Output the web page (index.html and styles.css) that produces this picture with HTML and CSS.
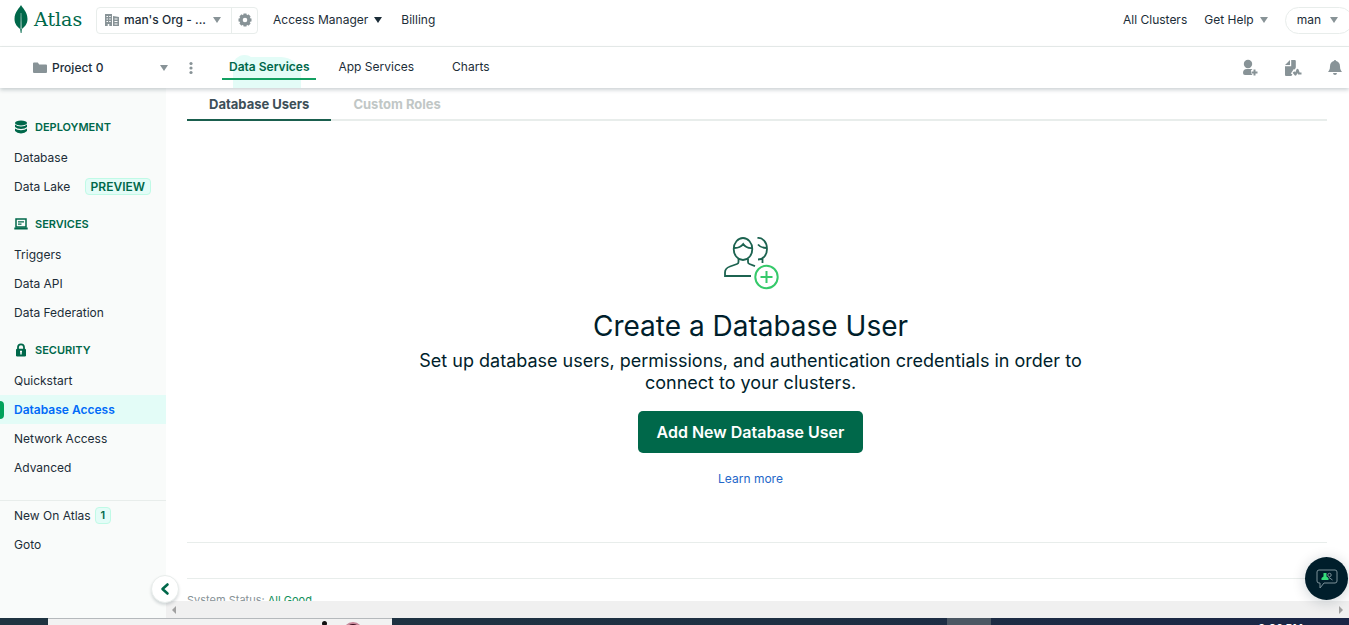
FILE: index.html
```html
<!DOCTYPE html>
<html lang="en">
<head>
<meta charset="utf-8">
<meta name="viewport" content="width=device-width, initial-scale=1">
<title>Database Access | Atlas</title>
<link rel="stylesheet" href="styles.css">
</head>
<body>
<header class="topbar">
  <a class="brand" href="#" aria-label="Atlas">
    <svg class="brand-leaf" viewBox="0 0 14 28" width="14" height="28" aria-hidden="true"><path fill="#00684a" d="M7 0C8 2.500 13.500 6.500 13.500 14c0 5-3 8-5.700 10L7.500 28h-.8L6.200 24C3.500 22 .5 19 .5 14 .5 6.500 6 2.500 7 0z"/><path fill="#fff" opacity=".7" d="M6.700 8h.6l.4 16h-1.200z"/></svg>
    <span>Atlas</span>
  </a>
  <div class="org">
    <div class="org-pick">
      <svg viewBox="0 0 14 14" width="14" height="14" aria-hidden="true"><path fill="#889397" fill-rule="evenodd" d="M0 1h7v12H0zM1.500 3v1h1.500V3zM4.200 3v1h1.500V3zM1.500 5.500v1h1.500v-1zM4.200 5.500v1h1.500v-1zM1.500 8v1h1.500V8zM4.200 8v1h1.500V8zM2.700 11v2h1.600v-2zM8 3l6 1v9H8zM9.500 5.500v1H12.500v-1zM9.500 8v1H12.500V8zM9.500 10.500v1H12.500v-1z"/></svg>
      <select aria-label="Organization"><option>man's Org - ...</option></select>
      <span class="caret grey"></span>
    </div>
    <button class="org-gear" aria-label="Organization settings"><svg viewBox="0 0 14 14" width="14" height="14"><circle cx="7" cy="7" r="4" fill="none" stroke="#889397" stroke-width="3.400"/><path stroke="#889397" stroke-width="3" d="M7 .5v2M7 11.500v2M.5 7h2M11.500 7h2M2.400 2.400l1.400 1.400M10.200 10.200l1.400 1.400M2.400 11.600l1.400-1.400M10.200 3.800l1.400-1.400"/></svg></button>
  </div>
  <nav class="top-links" aria-label="Organization">
    <button class="link">Access Manager <span class="caret"></span></button>
    <a class="link" href="#">Billing</a>
  </nav>
  <nav class="account" aria-label="Account">
    <a class="link" href="#">All Clusters</a>
    <button class="link">Get Help <span class="caret grey"></span></button>
    <button class="user">man <span class="caret grey"></span></button>
  </nav>
</header>
<div class="subbar">
  <div class="project">
    <svg viewBox="0 0 14 12" width="14" height="12" aria-hidden="true"><path fill="#889397" d="M0 1.500Q0 .5 1 .5h3.800l1.400 2H13q1 0 1 1V10q0 1-1 1H1q-1 0-1-1z"/></svg>
    <select aria-label="Project"><option>Project 0</option></select>
    <span class="caret grey"></span>
  </div>
  <button class="more" aria-label="Project options"><svg viewBox="0 0 4 14" width="4" height="14" fill="#889397"><circle cx="2" cy="2.500" r="1.600"/><circle cx="2" cy="7" r="1.600"/><circle cx="2" cy="11.500" r="1.600"/></svg></button>
  <nav class="services" aria-label="Services">
    <a class="service current" href="#">Data Services</a>
    <a class="service" href="#">App Services</a>
    <a class="service" href="#">Charts</a>
  </nav>
  <div class="tools">
    <button aria-label="Invite user"><svg viewBox="0 0 16 18" width="16" height="18" fill="#889397"><circle cx="6" cy="5" r="4.200"/><path d="M5 10h5.500L9 11.500V14l1.500 2H3q-2 0-2-2 0-4 4-4z"/><path stroke="#889397" stroke-width="2" d="M9.500 13.500h6M12.500 10.500v6"/></svg></button>
    <button aria-label="Activity feed"><svg viewBox="0 0 18 18" width="18" height="18" fill="#889397"><path d="M6 1v5H1zM7.200 1h3.600q1 0 1 1v6.500l-3 6.500-1.500 2H2q-1 0-1-1V7.200h6.200z"/><path fill="none" stroke="#fff" stroke-width="4" d="M8.500 15.500l3-4.500"/><path fill="none" stroke="#889397" stroke-width="2.200" stroke-linejoin="round" d="M9.500 13l2 2.500 2-4.500 1.300 3.500h2.700"/></svg></button>
    <button aria-label="Alerts"><svg viewBox="0 0 14 18" width="14" height="18" fill="#889397"><path d="M7 1q1 0 1.200 1Q12 3 12 7.500c0 3 1 4 2 5.500H0c1-1.500 2-2.500 2-5.500Q2 3 5.800 2 6 1 7 1zM5 14h4q-.2 2-2 2t-2-2z"/></svg></button>
  </div>
</div>
<div class="shell">
  <aside class="sidebar">
    <section>
      <h2><svg viewBox="0 0 14 14" width="14" height="14" fill="#00684a"><ellipse cx="7" cy="3" rx="6" ry="2.400"/><path d="M1 4.500Q3 6.400 7 6.400t6-1.900V7Q11 9 7 9T1 7zM1 8.400Q3 10.200 7 10.200t6-1.800V11Q11 13.400 7 13.400T1 11z"/></svg>DEPLOYMENT</h2>
      <a href="#">Database</a>
      <a class="spread" href="#">Data Lake <span class="badge wide">PREVIEW</span></a>
    </section>
    <section>
      <h2><svg viewBox="0 0 14 14" width="14" height="14"><path fill="none" stroke="#00684a" stroke-width="1.500" d="M2 2h10v8H2z"/><path stroke="#00684a" stroke-width="1.200" d="M4 4.800h6M4 7.200h3.500"/><path fill="#00684a" d="M.3 10.500h13.400v2H.3z"/></svg>SERVICES</h2>
      <a href="#">Triggers</a>
      <a href="#">Data API</a>
      <a href="#">Data Federation</a>
    </section>
    <section>
      <h2><svg viewBox="0 0 14 14" width="14" height="14"><path fill="none" stroke="#00684a" stroke-width="1.800" d="M4 6.500V4.300a3 3 0 0 1 6 0v2.200"/><rect x="2" y="5.800" width="10" height="7.700" rx="1.200" fill="#00684a"/><path stroke="#fff" stroke-width="1.400" d="M7 8v3.500M6 8.500h2"/></svg>SECURITY</h2>
      <a href="#">Quickstart</a>
      <a class="active" href="#" aria-current="page">Database Access</a>
      <a href="#">Network Access</a>
      <a href="#">Advanced</a>
    </section>
    <div class="extras">
      <a href="#">New On Atlas <span class="badge">1</span></a>
      <a href="#">Goto</a>
    </div>
    <button class="collapse" aria-label="Collapse navigation"><svg viewBox="0 0 12 14" width="12" height="14"><path fill="none" stroke="#00684a" stroke-width="2.600" stroke-linecap="round" stroke-linejoin="round" d="M8.500 2.500L3.500 7l5 4.500"/></svg></button>
  </aside>
  <div class="content">
    <main class="page">
      <nav class="tabs" aria-label="Database access">
        <a class="tab selected" href="#">Database Users</a>
        <a class="tab" href="#">Custom Roles</a>
      </nav>
      <div class="empty">
        <svg viewBox="0 0 56 56" width="56" height="56" fill="none" stroke="#1c6350" stroke-width="1.800" aria-hidden="true"><path d="M28 40H2v-3.500c0-3.500 2-5 5-6l7-2.500q1.500-.5 1.500-2v-3M25 23v3q0 1.500 1.500 2l5.500 2.200"/><ellipse cx="20" cy="13" rx="9.300" ry="11"/><path d="M10.800 12c4 .2 7.200-1 9.400-4 2 3 5 4.300 9.100 4M34.500 2c5-.5 9.500 4 9.500 11 0 5.500-3.500 10.500-9 10.500M35 8.500c2 2.500 5 3.500 8.500 3.500M39.500 23v4"/><circle cx="43.500" cy="41" r="11.200" stroke="#35c96a" stroke-width="2"/><path stroke="#35c96a" stroke-width="2" d="M37.500 41h12M43.500 35v12"/></svg>
        <h1>Create a Database User</h1>
        <p>Set up database users, permissions, and authentication credentials in order to connect to your clusters.</p>
        <button class="primary">Add New Database User</button>
        <a class="learn" href="#">Learn more</a>
      </div>
      <footer class="status"><p>System Status: <a href="#">All Good</a></p></footer>
    </main>
    <div class="scroll-track" aria-hidden="true"><span class="arrow-left"></span><span class="arrow-right"></span></div>
  </div>
</div>
<button class="chat" aria-label="Open chat"><svg viewBox="0 0 22 20" width="22" height="20"><path fill="none" stroke="#7c9199" d="M3 1h16q2 0 2 2v9q0 2-2 2H8l-4 5v-5H3q-2 0-2-2V3q0-2 2-2z"/><path fill="#35de7b" d="M7.500 4h3v3.500l2 1.500v2H5.500V9l2-1.500z"/><circle cx="13.500" cy="6" r="1.700" fill="none" stroke="#7c9199"/><path fill="none" stroke="#7c9199" d="M13 8.500l3.500 2.500"/></svg></button>
<div class="taskbar">
  <div class="task-search"><span class="hat"></span><span class="face"></span></div>
  <div class="task-active"></div>
  <time>9:06 PM</time>
</div>
</body>
</html>
```

FILE: styles.css
```css
* { box-sizing: border-box; }
body {
  margin: 0;
  height: 100vh;
  display: flex;
  flex-direction: column;
  overflow: hidden;
  background: #fff;
  color: #1c2d38;
  font: 12px/16px Inter, "Liberation Sans", sans-serif;
}
a { color: inherit; text-decoration: none; }
button, select {
  font: inherit;
  color: inherit;
  background: none;
  border: 0;
  padding: 0;
  margin: 0;
  cursor: pointer;
}
select { appearance: none; flex: 1; min-width: 0; font-weight: 500; }
h1, h2, p { margin: 0; }
svg { flex: none; display: block; }
.caret {
  flex: none;
  border: 4px solid transparent;
  border-top: 6px solid #1c2d38;
  border-bottom: 0;
}
.caret.grey { border-top-color: #889397; }

.topbar {
  flex: none;
  display: flex;
  align-items: center;
  height: 47px;
  padding: 0 0 6px 14px;
  border-bottom: 1px solid #e8edeb;
}
.brand {
  display: flex;
  align-items: center;
  gap: 6px;
  width: 82px;
  padding-bottom: 2px;
  color: #00684a;
  font: 19px/32px "DejaVu Serif", serif;
}
.org {
  display: flex;
  width: 162px;
  height: 27px;
  border: 1px solid #e8edeb;
  border-radius: 4px;
}
.org-pick {
  flex: 1;
  display: flex;
  align-items: center;
  gap: 5px;
  padding: 0 10px 0 8px;
  border-right: 1px solid #e8edeb;
}
.org-gear { width: 25px; display: grid; place-items: center; }
.top-links { display: flex; gap: 19px; margin-left: 15px; }
.link { display: flex; align-items: center; gap: 6px; white-space: nowrap; }
.account {
  display: flex;
  align-items: center;
  gap: 17px;
  margin: 0 -4px 0 auto;
}
.user {
  display: flex;
  align-items: center;
  gap: 9px;
  height: 27px;
  padding: 0 14px 0 11px;
  border: 1px solid #e8edeb;
  border-radius: 14px;
}

.subbar {
  flex: none;
  position: relative;
  z-index: 1;
  display: flex;
  align-items: center;
  height: 41px;
  padding: 0 7px 0 33px;
  box-shadow: 0 2px 4px rgba(0, 30, 43, .2);
}
.project { display: flex; align-items: center; gap: 5px; width: 135px; }
.more { margin-left: 21px; }
.services { display: flex; align-self: stretch; margin-left: 29px; }
.service {
  position: relative;
  margin: 3px 15px 8px 0;
  padding: 9px 7px 0;
}
.service + .service { margin-right: 24px; }
.current {
  color: #00684a;
  font-weight: 600;
  border-bottom: 2px solid #13a062;
}
/* Mint backdrop: a tall arch on the left, a lower shoulder on the right. */
.current::before, .current::after {
  content: "";
  position: absolute;
  z-index: -1;
  left: 11px;
  bottom: -10px;
  background: #e3fcf7;
}
.current::before {
  top: 5px;
  width: 23px;
  border-radius: 12px 12px 0 0;
}
.current::after {
  top: 7px;
  right: 15px;
  border-radius: 12px 20px 0 0;
}
.tools { display: flex; align-items: center; gap: 26px; margin-left: auto; }

.shell { flex: 1; min-height: 0; display: flex; }
.sidebar {
  position: relative;
  flex: none;
  width: 166px;
  padding-top: 22px;
  background: #f9fbfa;
}
.sidebar section { margin-bottom: 6px; }
.sidebar h2 {
  display: flex;
  align-items: center;
  gap: 7px;
  height: 33px;
  padding-left: 14px;
  color: #00684a;
  font-size: 11px;
  font-weight: 600;
}
.sidebar a {
  display: flex;
  align-items: center;
  gap: 4px;
  height: 29px;
  padding: 0 15px 0 14px;
}
.sidebar .spread { justify-content: space-between; }
.sidebar .active {
  position: relative;
  color: #016bf8;
  font-weight: 600;
  background: #e3fcf7;
  white-space: nowrap;
}
.active::before {
  content: "";
  position: absolute;
  left: 0;
  top: 6px;
  bottom: 5px;
  width: 4px;
  border-radius: 0 4px 4px 0;
  background: #00a35c;
}
.badge {
  padding: 0 5px;
  border: 1px solid #c0fae6;
  border-radius: 4px;
  background: #e3fcf7;
  color: #00684a;
  font-size: 11px;
  line-height: 15px;
  font-weight: 600;
}
.badge.wide { font-size: 12px; }
.extras { margin-top: 18px; border-top: 1px solid #e8edeb; }
.collapse {
  position: absolute;
  z-index: 2;
  right: -13px;
  bottom: 15px;
  width: 28px;
  height: 28px;
  display: grid;
  place-items: center;
  border: 1px solid #e8edeb;
  border-radius: 50%;
  background: #fff;
  box-shadow: 0 2px 3px rgba(0, 30, 43, .15);
}

.content { flex: 1; min-width: 0; display: flex; flex-direction: column; }
.page { flex: 1; min-height: 0; overflow: hidden; padding: 0 22px 0 21px; }
.tabs { display: flex; border-bottom: 2px solid #e8edeb; }
.tab {
  margin-bottom: -2px;
  padding: 8px 22px 7px;
  color: #c1c7c6;
  font-size: 13px;
  line-height: 16px;
  font-weight: 700;
  border-bottom: 2px solid transparent;
}
.selected { color: #3d4f58; border-color: #1a5f4e; }
.empty {
  display: flex;
  flex-direction: column;
  align-items: center;
  padding: 115px 13px 55px 0;
  border-bottom: 1px solid #e8edeb;
  color: #001e2b;
  text-align: center;
}
.empty h1 { margin-top: 18px; font-size: 28px; line-height: 32px; font-weight: 400; }
.empty p { max-width: 700px; margin-top: 8px; font-size: 18px; line-height: 22px; }
.primary {
  margin-top: 17px;
  padding: 0 19px;
  height: 42px;
  border-radius: 5px;
  background: #00684a;
  color: #fff;
  font-size: 16px;
  font-weight: 600;
}
.learn { margin-top: 18px; color: #2467c9; }
.status { margin-top: 35px; padding-top: 13px; border-top: 1px solid #e8edeb; color: #889397; font-size: 11px; }
.status a { color: #13905b; }
.scroll-track {
  flex: none;
  display: flex;
  justify-content: space-between;
  align-items: center;
  height: 17px;
  padding: 0 6px;
  background: #f0f0f0;
}
.arrow-left, .arrow-right { border: 4px solid transparent; }
.arrow-left { border-right-color: #a0a0a0; border-left: 0; }
.arrow-right { border-left-color: #a0a0a0; border-right: 0; }

.chat {
  position: absolute;
  z-index: 3;
  right: 1px;
  bottom: 25px;
  width: 43px;
  height: 43px;
  display: grid;
  place-items: center;
  border-radius: 50%;
  background: #001e2b;
  box-shadow: 0 2px 14px rgba(0, 30, 43, .2);
}
.taskbar {
  flex: none;
  display: flex;
  height: 7px;
  overflow: hidden;
  padding: 0 46px 0 48px;
  background: linear-gradient(90deg, #1f3441, #1d2f42 60%, #1a2546);
}
.task-search {
  display: flex;
  align-items: flex-start;
  gap: 16px;
  width: 344px;
  padding: 3px 0 0 274px;
  border-top: 1px solid #b5b9bc;
  background: #f2f2f2;
}
.hat { width: 5px; height: 5px; border-radius: 50%; background: #111; margin-top: -1px; }
.face { width: 20px; height: 20px; border-radius: 50%; background: #3a1020; border: 2px solid #c88a9c; }
.task-active { width: 44px; margin-left: 555px; background: #4b5763; }
.taskbar time { margin-left: auto; padding-top: 2px; color: #fff; font-size: 11px; line-height: 16px; font-weight: 600; }
```
